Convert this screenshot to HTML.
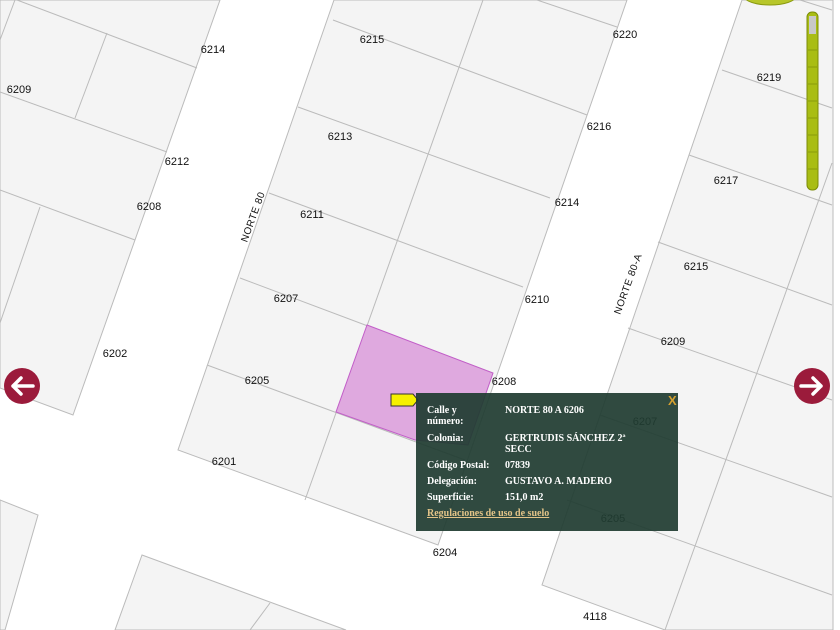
<!DOCTYPE html>
<html><head><meta charset="utf-8"><style>
html,body{margin:0;padding:0;width:840px;height:630px;overflow:hidden;background:#fff}
svg{position:absolute;left:0;top:0}
.pop{position:absolute;left:416px;top:393px;width:262px;height:138px;background:rgba(32,60,50,0.93);font-family:"Liberation Serif",serif;font-weight:bold;font-size:10px;color:#fff;line-height:11px}
.pop div{position:absolute}
.l{left:11px}.v{left:89px}
.x{position:absolute;left:252px;top:2px;color:#d4a030;font-family:"Liberation Sans",sans-serif;font-size:13px;font-weight:bold}
a{color:#e3c488;text-decoration:underline}
</style></head><body>
<svg width="840" height="630" viewBox="0 0 840 630">
<g fill="#f4f4f4" stroke="#bbb" stroke-width="1">
<polygon points="0,0 220,0 73,415 0,388"/>
<polygon points="334,0 627,0 438,545 178,450"/>
<polygon points="742,0 833,0 833,630 665,630 542,585"/>
<polygon points="142,555 346,630 115,630"/>
<polygon points="0,500 38,515 5,630 0,630"/>
</g>
<g stroke="#bbb" stroke-width="1" fill="none">
<line x1="15" y1="0" x2="0" y2="40"/>
<line x1="107" y1="33" x2="75" y2="118"/>
<line x1="40" y1="207" x2="0" y2="323"/>
<line x1="17" y1="0" x2="197" y2="68"/>
<line x1="0" y1="92" x2="167" y2="152"/>
<line x1="0" y1="190" x2="135" y2="240"/>
<line x1="483" y1="0" x2="305" y2="500"/>
<line x1="537" y1="0" x2="617" y2="27"/>
<line x1="333" y1="20" x2="587" y2="115"/>
<line x1="298" y1="107" x2="550" y2="198"/>
<line x1="269" y1="193" x2="523" y2="287"/>
<line x1="240" y1="278" x2="493" y2="373"/>
<line x1="207" y1="365" x2="465" y2="460"/>
<line x1="800" y1="0" x2="832" y2="10"/>
<line x1="722" y1="70" x2="832" y2="108"/>
<line x1="689" y1="155" x2="832" y2="205"/>
<line x1="658" y1="242" x2="832" y2="305"/>
<line x1="628" y1="328" x2="832" y2="400"/>
<line x1="600" y1="415" x2="832" y2="497"/>
<line x1="567" y1="500" x2="832" y2="595"/>
<line x1="832" y1="163" x2="665" y2="630"/>
<line x1="270" y1="603" x2="250" y2="630"/>
</g>
<polygon points="367,325 493,373 468,445 415,440 336,412" fill="#dfa9df" stroke="#c25ec8" stroke-width="1"/>
<g font-family="Liberation Sans,sans-serif" font-size="11" fill="#111" text-anchor="middle">
<text x="213" y="53">6214</text><text x="372" y="43">6215</text><text x="625" y="38">6220</text>
<text x="769" y="81">6219</text><text x="19" y="93">6209</text><text x="599" y="130">6216</text>
<text x="340" y="140">6213</text><text x="177" y="165">6212</text><text x="726" y="184">6217</text>
<text x="149" y="210">6208</text><text x="567" y="206">6214</text><text x="312" y="218">6211</text>
<text x="696" y="270">6215</text><text x="286" y="302">6207</text><text x="537" y="303">6210</text>
<text x="673" y="345">6209</text><text x="115" y="357">6202</text><text x="504" y="385">6208</text>
<text x="257" y="384">6205</text><text x="645" y="425">6207</text><text x="224" y="465">6201</text>
<text x="613" y="522">6205</text><text x="445" y="556">6204</text><text x="595" y="620">4118</text>
<text x="0" y="0" transform="translate(256,218) rotate(-70)" font-size="10" letter-spacing="0.5">NORTE 80</text>
<text x="0" y="0" transform="translate(631,285) rotate(-70)" font-size="10" letter-spacing="0.5">NORTE 80-A</text>
</g>
<circle cx="22" cy="386" r="18" fill="#9b1b3b"/>
<path d="M33 386H13M21 378L13 386L21 394" stroke="#fff" stroke-width="3.5" fill="none" stroke-linecap="round" stroke-linejoin="round"/>
<circle cx="812" cy="386" r="18" fill="#9b1b3b"/>
<path d="M801 386H821M813 378L821 386L813 394" stroke="#fff" stroke-width="3.5" fill="none" stroke-linecap="round" stroke-linejoin="round"/>
<ellipse cx="770" cy="-4" rx="26" ry="9" fill="#b7c62a" stroke="#8a9a10"/>
<rect x="807" y="12" width="11" height="178" rx="5" fill="#a9bd14" stroke="#7c8c08"/>
<rect x="809" y="16" width="7" height="18" fill="#c8c8c8"/>
<g stroke="#7c8c08" stroke-width="0.7">
<line x1="808" y1="50" x2="817" y2="50"/><line x1="808" y1="67" x2="817" y2="67"/><line x1="808" y1="84" x2="817" y2="84"/><line x1="808" y1="101" x2="817" y2="101"/><line x1="808" y1="118" x2="817" y2="118"/><line x1="808" y1="135" x2="817" y2="135"/><line x1="808" y1="152" x2="817" y2="152"/><line x1="808" y1="169" x2="817" y2="169"/>
</g>
<path d="M391 394H413L418 400L413 406H391Z" fill="#f5f000" stroke="#333" stroke-width="1"/>
</svg>
<div class="pop">
<div class="x">X</div>
<div class="l" style="top:12px">Calle y<br>número:</div><div class="v" style="top:12px">NORTE 80 A 6206</div>
<div class="l" style="top:40px">Colonia:</div><div class="v" style="top:40px">GERTRUDIS SÁNCHEZ 2ª<br>SECC</div>
<div class="l" style="top:67px">Código Postal:</div><div class="v" style="top:67px">07839</div>
<div class="l" style="top:83px">Delegación:</div><div class="v" style="top:83px">GUSTAVO A. MADERO</div>
<div class="l" style="top:99px">Superficie:</div><div class="v" style="top:99px">151,0 m2</div>
<div class="l" style="top:115px"><a>Regulaciones de uso de suelo</a></div>
</div>
</body></html>
